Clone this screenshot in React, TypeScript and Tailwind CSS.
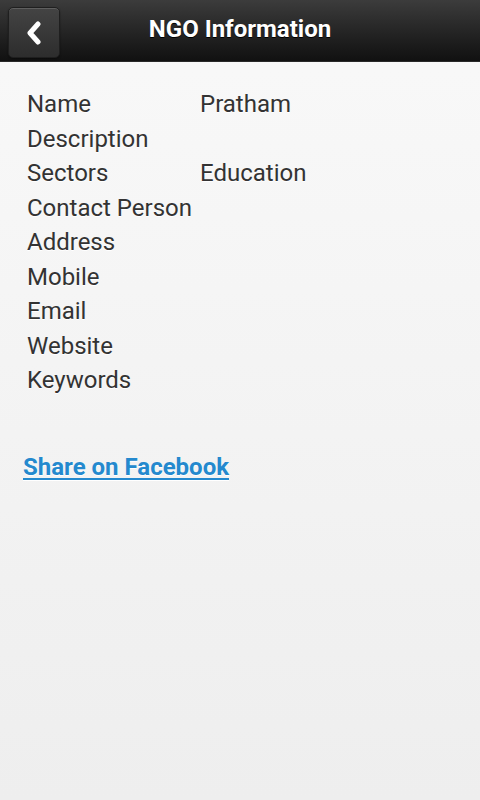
const rows: [string, string][] = [
  ["Name", "Pratham"],
  ["Description", ""],
  ["Sectors", "Education"],
  ["Contact Person", ""],
  ["Address", ""],
  ["Mobile", ""],
  ["Email", ""],
  ["Website", ""],
  ["Keywords", ""],
];

export default function App() {
  return (
    <div className="flex h-[800px] w-[480px] flex-col bg-gradient-to-b from-[#f9f9f9] to-[#eeeeee] font-['Roboto',sans-serif]">
      <header className="relative flex h-[62px] shrink-0 items-center justify-center border-b border-[#2a2a2a] bg-gradient-to-b from-[#3c3c3c] to-[#111111] pb-[4px]">
        <button className="absolute left-[8px] top-[7px] flex h-[51px] w-[52px] items-center justify-center rounded-[5px] border border-[#1f1f1f] bg-gradient-to-b from-[#444] to-[#2d2d2d] shadow-[inset_0_1px_0_rgba(255,255,255,0.15),0_1px_2px_rgba(0,0,0,0.4)]">
          <svg width="18" height="24" viewBox="0 0 18 24">
            <path
              d="M13 3 L5 12 L13 21"
              fill="none"
              stroke="#fff"
              strokeWidth="5"
              strokeLinecap="round"
              strokeLinejoin="round"
            />
          </svg>
        </button>
        <h1 className="text-[24px] font-bold text-white [text-shadow:0_1px_0_#000]">
          NGO Information
        </h1>
      </header>

      <main className="px-[27px] pt-[25px] text-[24px] text-[#333] [text-shadow:0_1px_0_#fff]">
        <div className="grid grid-cols-[173px_1fr] leading-[34.5px]">
          {rows.map(([k, v]) => (
            <div key={k} className="contents">
              <div className="whitespace-nowrap">{k}</div>
              <div>{v}</div>
            </div>
          ))}
        </div>
        <a
          href="#"
          className="-ml-[4px] mt-[51px] inline-block font-bold text-[#2489ce] underline underline-offset-[3px]"
        >
          Share on Facebook
        </a>
      </main>
    </div>
  );
}
